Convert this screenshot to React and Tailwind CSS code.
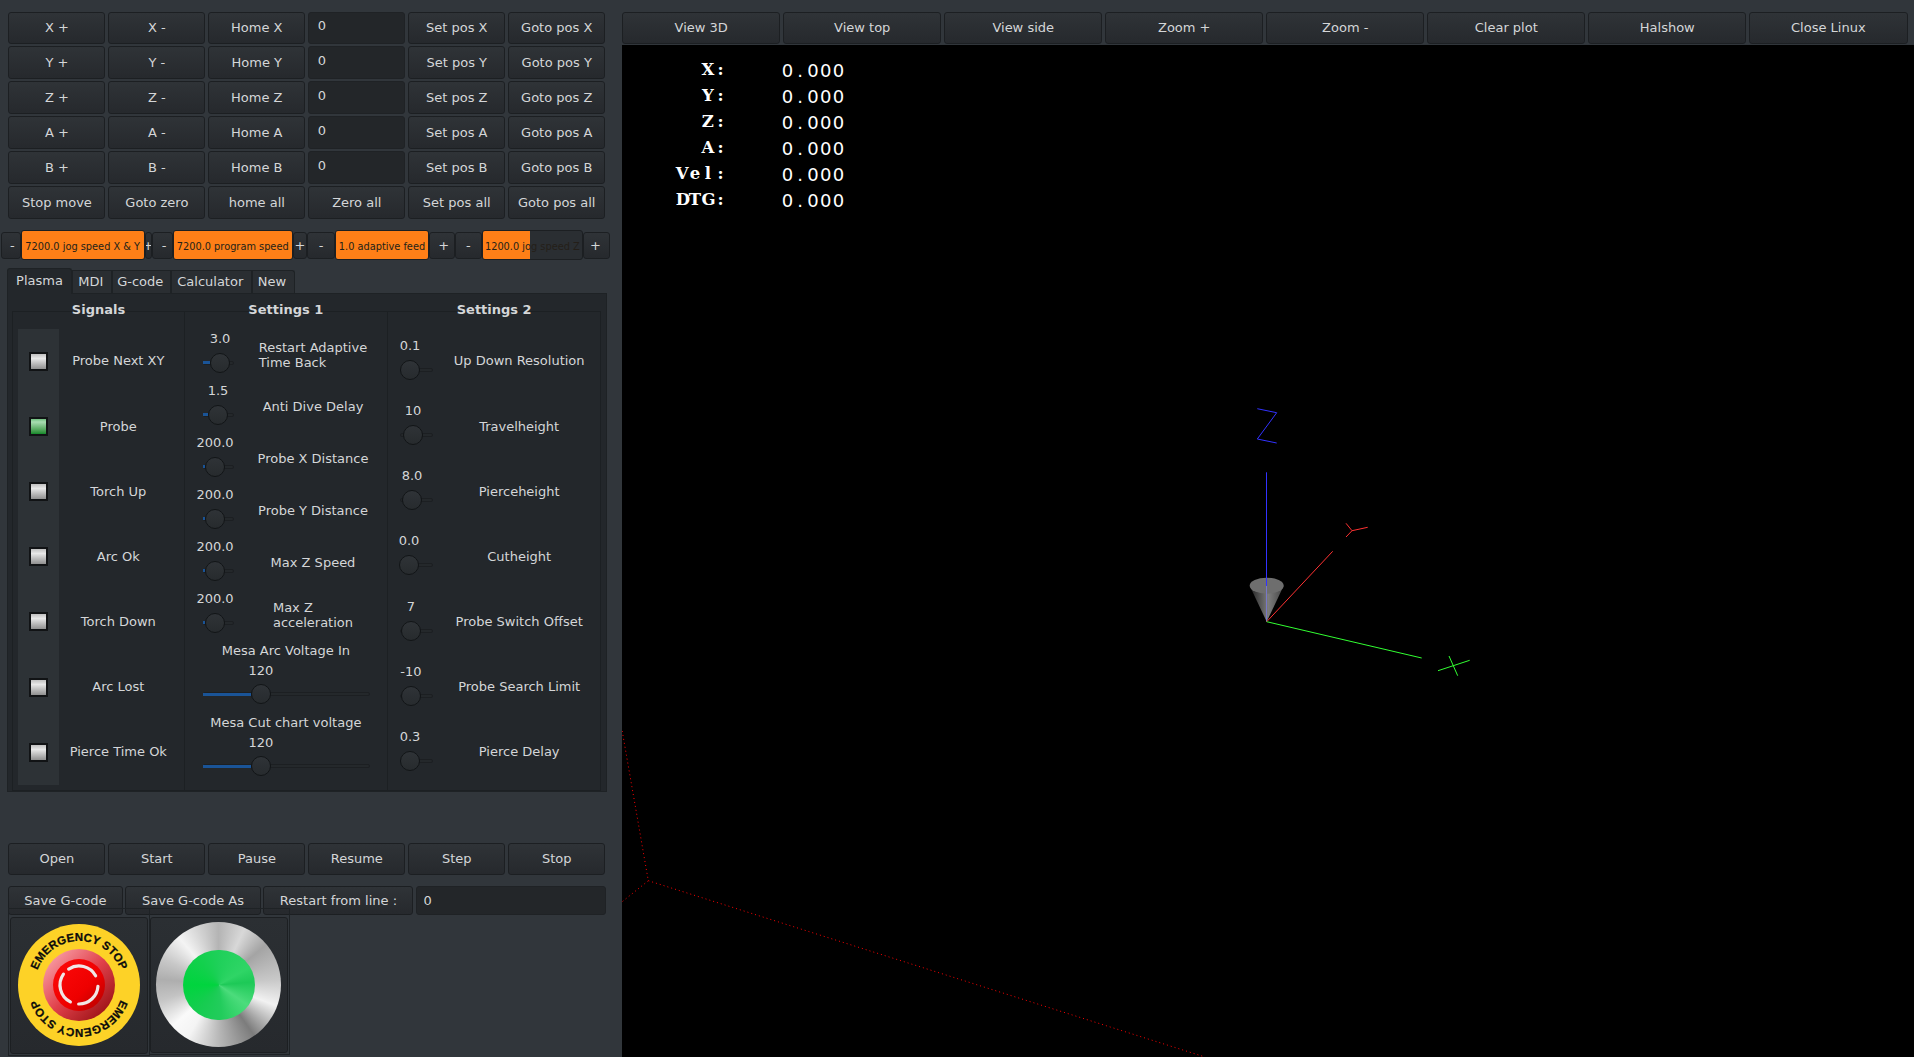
import React from 'react';

const AXES = ['X', 'Y', 'Z', 'A', 'B'];
const RUN = ['Open', 'Start', 'Pause', 'Resume', 'Step', 'Stop'];
const VIEWS = ['View 3D', 'View top', 'View side', 'Zoom +', 'Zoom -', 'Clear plot', 'Halshow', 'Close Linux'];
const SIGNALS = ['Probe Next XY', 'Probe', 'Torch Up', 'Arc Ok', 'Torch Down', 'Arc Lost', 'Pierce Time Ok'];
const DRO = ['X:', 'Y:', 'Z:', 'A:', 'Vel:', 'DTG:'];

const TABS = [
  { name: 'Plasma', cls: 'w-[65px] h-[26px] bg-[#23272b] rounded-t-[3px]' },
  { name: 'MDI', cls: 'w-[39.5px] h-[23px] bg-[#2a2e32] pr-[2px]' },
  { name: 'G-code', cls: 'w-[59.5px] h-[23px] bg-[#2a2e32] pr-[2px]' },
  { name: 'Calculator', cls: 'w-[80.5px] h-[23px] bg-[#2a2e32] pr-[2px]' },
  { name: 'New', cls: 'w-[43px] h-[23px] bg-[#2a2e32] pr-[2px] rounded-tr-[3px]' },
];

const SETTINGS_1 = [
  { value: '3.0', pos: 17, label: 'Restart Adaptive\nTime Back' },
  { value: '1.5', pos: 15, label: 'Anti Dive Delay' },
  { value: '200.0', pos: 12, label: 'Probe X Distance' },
  { value: '200.0', pos: 12, label: 'Probe Y Distance' },
  { value: '200.0', pos: 12, label: 'Max Z Speed' },
  { value: '200.0', pos: 12, label: 'Max Z\nacceleration' },
];

const SETTINGS_2 = [
  { value: '0.1', pos: 10, label: 'Up Down Resolution' },
  { value: '10', pos: 13, label: 'Travelheight' },
  { value: '8.0', pos: 12, label: 'Pierceheight' },
  { value: '0.0', pos: 9, label: 'Cutheight' },
  { value: '7', pos: 11, label: 'Probe Switch Offset' },
  { value: '-10', pos: 11, label: 'Probe Search Limit' },
  { value: '0.3', pos: 10, label: 'Pierce Delay' },
];

const SPEEDS = [
  { text: '7200.0 jog speed X & Y', minus: 'w-[19.7px] pl-[3px]', bar: 'w-[124px]', plus: 'w-[7px]', fill: 100 },
  { text: '7200.0 program speed', minus: 'w-[21px] pl-[4px]', bar: 'w-[120px]', plus: 'w-[14.6px]', fill: 100 },
  { text: '1.0 adaptive feed', minus: 'w-[27.4px]', bar: 'w-[94.6px]', plus: 'w-[26px] pl-[3px]', fill: 100 },
  { text: '1200.0 jog speed Z', minus: 'w-[26.3px]', bar: 'w-[101.6px]', plus: 'w-[26.4px] pr-[2px]', fill: 48 },
];

function Btn({ children, className = '' }) {
  return (
    <button className={`flex items-center justify-center rounded-[3px] border border-[#1c1f22] bg-gradient-to-b from-[#2f3337] to-[#26292d] text-[#d4d6d8] ${className}`}>
      {children}
    </button>
  );
}

function Field({ className = '' }) {
  return (
    <input
      readOnly
      value="0"
      className={`rounded-[3px] border border-[#1f2225] bg-[#232629] text-[#d4d6d8] outline-none ${className}`}
    />
  );
}

function Knob({ pos }) {
  return (
    <div
      className="absolute top-1/2 h-[20px] w-[20px] -translate-x-1/2 -translate-y-1/2 rounded-full border border-[#121517] bg-gradient-to-b from-[#2f3337] to-[#272b2e]"
      style={{ left: pos }}
    />
  );
}

// Small dial: the value label follows the knob along the track
function Dial({ value, pos, fill = true, className = '' }) {
  return (
    <div className={`relative shrink-0 ${className}`}>
      <div className="relative h-[20px]">
        <span className="absolute top-0 -translate-x-1/2 leading-[20px]" style={{ left: pos }}>{value}</span>
      </div>
      <div className="relative mt-[4px] h-[20px]">
        <div className="absolute left-0 right-0 top-[8px] h-[4px] rounded-[2px] border border-[#1c1f22] bg-[#24282b]" />
        {fill && <div className="absolute left-0 top-[8.5px] h-[3px] bg-[#1a5497]" style={{ width: Math.max(pos - 10, 0) }} />}
        <Knob pos={pos} />
      </div>
    </div>
  );
}

function WideSlider({ title, value, pos }) {
  return (
    <div className="h-[72px]">
      <div className="text-center leading-[20px]">{title}</div>
      <div className="relative ml-[18.3px] h-[20px] w-[167.5px]">
        <span className="absolute top-0 -translate-x-1/2 leading-[20px]" style={{ left: pos }}>{value}</span>
      </div>
      <div className="relative ml-[18.3px] mt-[3.7px] h-[20px] w-[167.5px]">
        <div className="absolute left-0 right-0 top-[8px] h-[4px] rounded-[2px] border border-[#1c1f22] bg-[#24282b]" />
        <div className="absolute left-0 top-[8.5px] h-[3px] bg-[#1a5497]" style={{ width: pos - 10 }} />
        <Knob pos={pos} />
      </div>
    </div>
  );
}

function Led({ on }) {
  return (
    <div className={`h-[19px] w-[19px] border-2 border-[#111315] bg-gradient-to-b ${on ? 'from-[#6fbf7f] via-[#a8dcb2] via-20% to-[#0f8a2a]' : 'from-[#c0c0c0] via-[#e8e8e8] via-30% to-[#909090]'}`} />
  );
}

function SpeedBar({ text, bar, fill }) {
  return (
    <div className={`relative flex h-[30px] items-center justify-center overflow-hidden rounded-[3px] border border-[#1c1f22] bg-[#2a2e32] ${bar}`}>
      <div className="absolute inset-y-0 left-0 bg-[#ff7f17]" style={{ width: `${fill}%` }} />
      <span className="relative whitespace-nowrap pt-[4px] text-[9.8px] text-[#241f19]">{text}</span>
    </div>
  );
}

// Cells keep the overlay text on a fixed pitch, like the bitmap font of the plot
function Cells({ text }) {
  return text.split('').map((c, i) => (
    <span key={i} className="inline-block w-[12.8px] text-center">{c}</span>
  ));
}

function arc(r, from, to) {
  const pt = (deg) => {
    const a = (deg * Math.PI) / 180;
    return `${(r * Math.sin(a)).toFixed(2)} ${(-r * Math.cos(a)).toFixed(2)}`;
  };
  return `M ${pt(from)} A ${r} ${r} 0 0 1 ${pt(to)}`;
}

function EStop() {
  return (
    <svg width="124" height="124" viewBox="-62 -62 124 124">
      <defs>
        <linearGradient id="ring" x1="0" y1="0" x2="1" y2="1">
          <stop offset="0" stopColor="#ffb4bc" />
          <stop offset="0.5" stopColor="#e0404a" />
          <stop offset="1" stopColor="#8a0608" />
        </linearGradient>
        <linearGradient id="cap" x1="0" y1="0" x2="1" y2="1">
          <stop offset="0" stopColor="#ff0a0a" />
          <stop offset="0.6" stopColor="#ee0000" />
          <stop offset="1" stopColor="#b00000" />
        </linearGradient>
        <path id="arcTop" d="M -44 0 A 44 44 0 0 1 44 0" />
        <path id="arcBottom" d="M 44 0 A 44 44 0 0 1 -44 0" />
      </defs>
      <circle r="61" fill="#fdd227" />
      <circle r="36" fill="url(#ring)" />
      <circle r="26" fill="url(#cap)" />
      <g fill="none" stroke="#f0e6e6" strokeWidth="3.2" strokeLinecap="round">
        <path d={arc(19, -33, 61)} />
        <path d={arc(19, 94, 181)} />
        <path d={arc(19, 207, 305)} />
      </g>
      <g fontFamily="'Liberation Sans', sans-serif" fontWeight="700" fontSize="11.5" fill="#0c0c0c" stroke="#0c0c0c" strokeWidth="0.25">
        <text>
          <textPath href="#arcTop" startOffset="50%" textAnchor="middle">EMERGENCY STOP</textPath>
        </text>
        <text>
          <textPath href="#arcBottom" startOffset="50%" textAnchor="middle">EMERGENCY STOP</textPath>
        </text>
      </g>
    </svg>
  );
}

function MetalButton() {
  return (
    <div className="flex h-[125px] w-[125px] items-center justify-center rounded-full bg-[conic-gradient(#b4b4b4_0deg,#d8d8d8_25deg,#a4a4a4_50deg,#c8c8c8_85deg,#f2f2f2_110deg,#7c7c7c_145deg,#b5b5b5_178deg,#f4f4f4_210deg,#fafafa_228deg,#c4c4c4_255deg,#aeaeae_275deg,#c8c8c8_295deg,#f4f4f4_320deg,#cccccc_345deg,#b4b4b4_360deg)]">
      <div className="h-[70px] w-[72px] rounded-full bg-[conic-gradient(#1fd05a_0deg,#2fd566_60deg,#1dc957_85deg,#4cdc7c_125deg,#22cc5c_175deg,#16cc50_220deg,#00d43e_270deg,#12d04c_320deg,#1fd05a_360deg)]" />
    </div>
  );
}

function Plot() {
  return (
    <svg className="absolute inset-0 h-full w-full" viewBox="622 45 1292 1012" fill="none">
      <defs>
        <linearGradient id="cone" x1="0" y1="0" x2="1" y2="0">
          <stop offset="0" stopColor="#222222" />
          <stop offset="0.55" stopColor="#7c7c7c" />
          <stop offset="1" stopColor="#444444" />
        </linearGradient>
      </defs>
      {/* machine limits */}
      <g stroke="#ff0000" strokeWidth="1" strokeDasharray="1 3">
        <path d="M622.2 731 L648.3 880.7 L622.2 901.7" />
        <path d="M648.3 880.7 L1205 1057" />
      </g>
      {/* tool cone */}
      <path d="M1249.7 585.7 L1266.7 621.7 L1283.7 585.7 Z" fill="url(#cone)" />
      <ellipse cx="1266.7" cy="585.7" rx="17" ry="8" fill="#6e6e6e" />
      {/* axes */}
      <path d="M1266.5 472.3 V586" stroke="#3232ff" strokeWidth="1" />
      <path d="M1266.5 586 V621.7" stroke="#7878c8" strokeWidth="1" />
      <path d="M1257.3 408.7 L1276.7 412.7 L1257.3 439 L1276.7 443" stroke="#3232ff" strokeWidth="1" />
      <path d="M1266.7 621.7 L1332.7 551.3" stroke="#ff3232" strokeWidth="1" />
      <path d="M1346 523.3 L1352 530.7 L1367.7 527.3 M1352 530.7 L1346 537" stroke="#ff3232" strokeWidth="1" />
      <path d="M1266.7 621.7 L1421.7 658" stroke="#32ff32" strokeWidth="1" />
      <path d="M1438 670.7 L1469.7 660.3 M1449 656 L1457.7 675.7" stroke="#32ff32" strokeWidth="1" />
    </svg>
  );
}

export default function App() {
  return (
    <div className="flex h-screen w-screen overflow-hidden bg-[#31363b] font-['DejaVu_Sans',sans-serif] text-[13px] text-[#d4d6d8]">
      {/* Left control column */}
      <div className="w-[622px] shrink-0 pt-[11.5px]">
        <div className="ml-[8.3px] grid w-[597px] grid-cols-6 gap-x-[2.8px] gap-y-[2.6px]">
          {AXES.map((a) => (
            <React.Fragment key={a}>
              <Btn className="h-[32.4px]">{a} +</Btn>
              <Btn className="h-[32.4px]">{a} -</Btn>
              <Btn className="h-[32.4px]">Home {a}</Btn>
              <Field className="h-[32.4px] w-full pb-[4px] pl-[8.5px]" />
              <Btn className="h-[32.4px]">Set pos {a}</Btn>
              <Btn className="h-[32.4px]">Goto pos {a}</Btn>
            </React.Fragment>
          ))}
          <Btn className="h-[32.4px]">Stop move</Btn>
          <Btn className="h-[32.4px]">Goto zero</Btn>
          <Btn className="h-[32.4px]">home all</Btn>
          <Btn className="h-[32.4px]">Zero all</Btn>
          <Btn className="h-[32.4px]">Set pos all</Btn>
          <Btn className="h-[32.4px]">Goto pos all</Btn>
        </div>

        {/* Speed bars */}
        <div className="ml-[1px] mt-[11.5px] flex items-center">
          {SPEEDS.map((s) => (
            <React.Fragment key={s.text}>
              <Btn className={`h-[27.5px] shrink-0 text-[13px] ${s.minus}`}>-</Btn>
              <SpeedBar text={s.text} bar={s.bar} fill={s.fill} />
              <Btn className={`h-[27.5px] shrink-0 overflow-hidden text-[13px] ${s.plus}`}>+</Btn>
            </React.Fragment>
          ))}
        </div>

        {/* Tabs */}
        <div className="ml-[7px] mt-[7.5px] flex h-[25px] items-start">
          {TABS.map((t, i) => (
            <div
              key={t.name}
              className={`flex shrink-0 items-center justify-center border border-b-0 border-[#1e2225] ${i === 0 ? 'relative z-10 pb-[2px]' : 'mt-[2px]'} ${t.cls}`}
            >
              {t.name}
            </div>
          ))}
        </div>

        {/* Tab pane */}
        <div className="ml-[7px] h-[499px] w-[599.5px] border border-[#1e2225] bg-[#23272b] pl-[4.3px] pt-[16.7px]">
          <div className="flex h-[480px]">
            {/* Signals */}
            <div className="w-[172.4px] shrink-0 border border-[#1c2023]">
              <div className="-mt-[11px] mb-[10px] text-center font-bold leading-[18px]">Signals</div>
              <div className="flex">
                <div className="ml-[5px] w-[41px] shrink-0 bg-[#2d3236]">
                  {SIGNALS.map((s, i) => (
                    <div key={s} className="flex h-[65.2px] items-center justify-center">
                      <Led on={i === 1} />
                    </div>
                  ))}
                </div>
                <div className="w-[118px] shrink-0">
                  {SIGNALS.map((s) => (
                    <div key={s} className="flex h-[65.2px] items-center justify-center whitespace-nowrap">{s}</div>
                  ))}
                </div>
              </div>
            </div>

            {/* Settings 1 */}
            <div className="w-[203.3px] shrink-0 border border-l-0 border-[#1c2023]">
              <div className="-mt-[11px] mb-[10px] text-center font-bold leading-[18px]">Settings 1</div>
              {SETTINGS_1.map((r, i) => (
                <div key={i} className="flex h-[52px] items-start">
                  <Dial value={r.value} pos={r.pos} className="ml-[18.3px] w-[31px]" />
                  <div className="ml-[9px] flex h-[52px] w-[140px] items-center justify-center">
                    <span className="whitespace-pre-line text-left leading-[15px]">{r.label}</span>
                  </div>
                </div>
              ))}
              <WideSlider title="Mesa Arc Voltage In" value="120" pos={58} />
              <WideSlider title="Mesa Cut chart voltage" value="120" pos={58} />
            </div>

            {/* Settings 2 */}
            <div className="w-[213.4px] shrink-0 border border-l-0 border-[#1c2023]">
              <div className="-mt-[11px] mb-[10px] text-center font-bold leading-[18px]">Settings 2</div>
              {SETTINGS_2.map((r, i) => (
                <div key={i} className="flex h-[65.2px] items-start">
                  <Dial value={r.value} pos={r.pos} fill={false} className="ml-[12px] mt-[7.3px] w-[32.6px]" />
                  <div className="ml-[5.4px] flex h-[65.2px] w-[163px] items-center justify-center whitespace-nowrap">{r.label}</div>
                </div>
              ))}
            </div>
          </div>
        </div>

        {/* Program controls */}
        <div className="ml-[8.3px] mt-[51px] grid w-[597px] grid-cols-6 gap-x-[2.8px]">
          {RUN.map((r) => (
            <Btn key={r} className="h-[32px]">{r}</Btn>
          ))}
        </div>
        <div className="ml-[8.3px] mt-[11px] flex h-[29.4px] w-[597.5px] gap-x-[2.6px]">
          <Btn className="w-[114.3px]">Save G-code</Btn>
          <Btn className="w-[135.7px]">Save G-code As</Btn>
          <Btn className="w-[150px]">Restart from line :</Btn>
          <Field className="flex-1 pl-[6.5px]" />
        </div>

        {/* Image buttons */}
        <div className="relative ml-[7.5px] -mt-[7.4px] flex items-start">
          <div className="flex h-[148px] w-[142px] items-start justify-center border border-[#1e2225] pt-[8px]">
            <div className="flex h-[137px] w-[138px] items-center justify-center rounded-[3px] border border-[#1c1f22] bg-gradient-to-b from-[#2b2f33] to-[#26292d]">
              <EStop />
            </div>
          </div>
          <div className="flex h-[147px] w-[140px] items-start justify-start border border-l-0 border-[#1e2225] pt-[8px]">
            <div className="flex h-[135.7px] w-[138px] items-center justify-center rounded-[3px] border border-[#1c1f22] bg-gradient-to-b from-[#2b2f33] to-[#26292d]">
              <MetalButton />
            </div>
          </div>
        </div>
      </div>

      {/* Plot column */}
      <div className="flex min-w-0 flex-1 flex-col">
        <div className="mt-[11.7px] grid h-[32px] w-[1285.5px] shrink-0 grid-cols-8 gap-x-[2.6px]">
          {VIEWS.map((v) => (
            <Btn key={v}>{v}</Btn>
          ))}
        </div>
        <div className="relative mt-[1.3px] flex-1 overflow-hidden bg-black pt-[12.7px]">
          <Plot />
          <div className="relative">
            {DRO.map((d) => (
              <div key={d} className="flex h-[26px] items-center text-white">
                <div className="w-[105px] text-right font-['DejaVu_Serif',serif] text-[16.5px] font-bold"><Cells text={d} /></div>
                <div className="ml-[54px] font-['DejaVu_Sans',sans-serif] text-[18px]"><Cells text="0.000" /></div>
              </div>
            ))}
          </div>
        </div>
      </div>
    </div>
  );
}
